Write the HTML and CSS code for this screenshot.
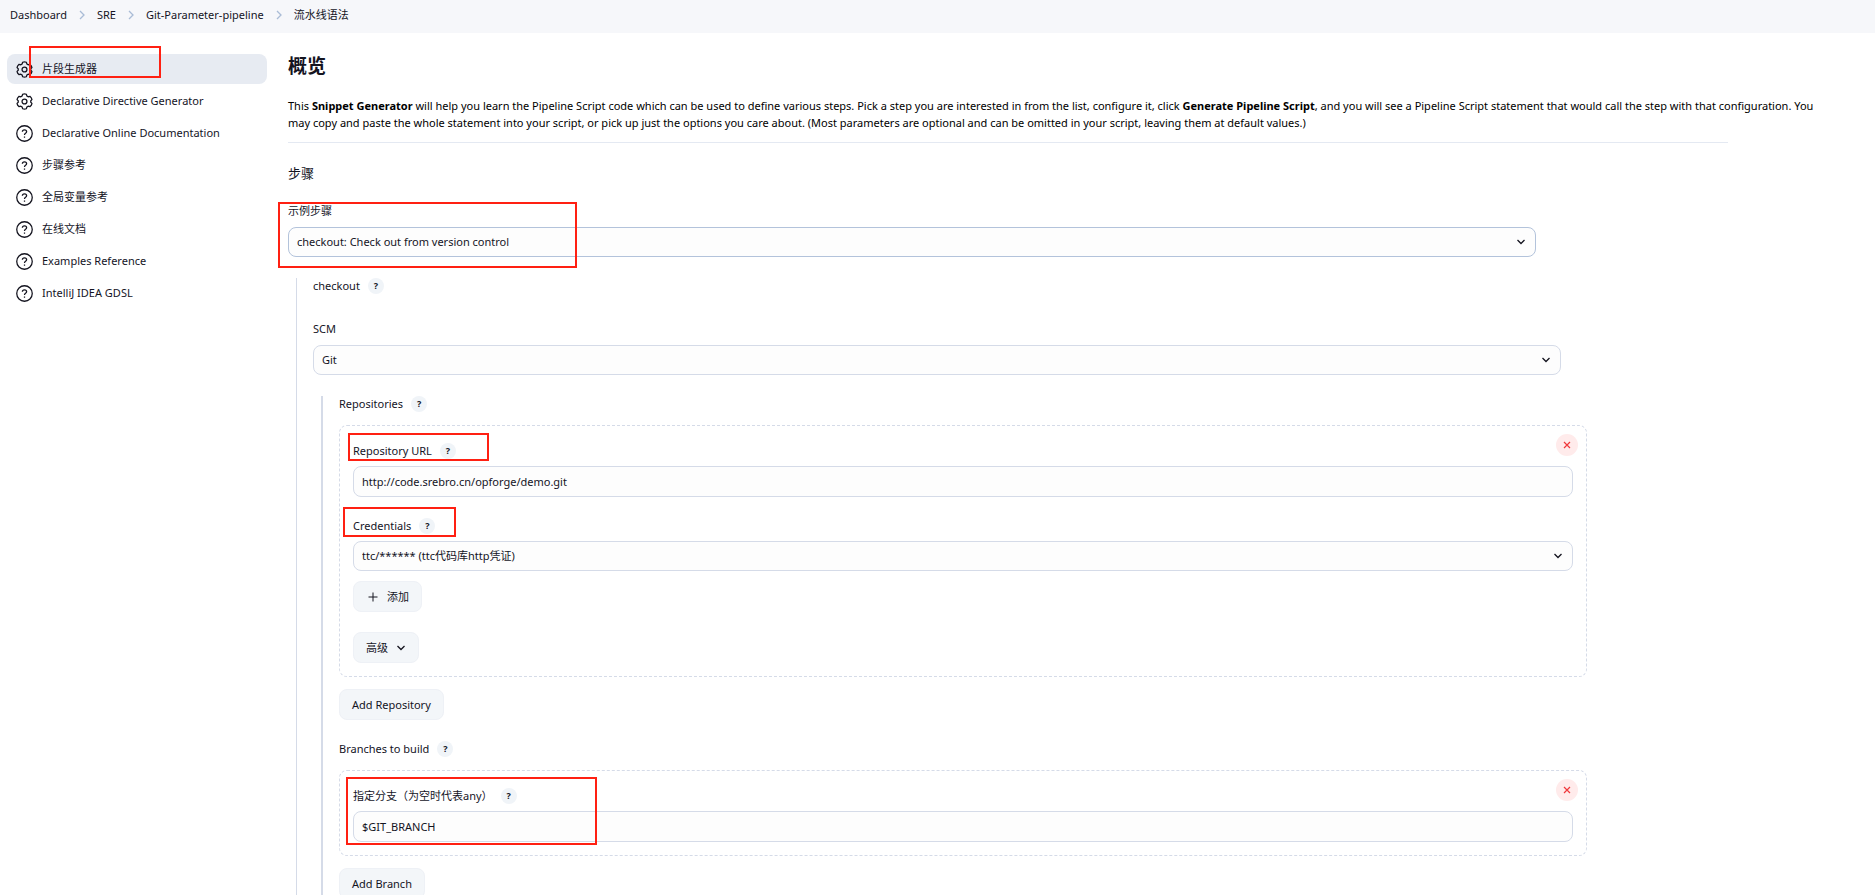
FILE: index.html
```html
<!DOCTYPE html>
<html lang="zh-CN">
<head>
    <meta charset="UTF-8">
    <meta name="viewport" content="width=device-width, initial-scale=1.0">
    <title>流水线语法</title>
    <link rel="stylesheet" href="styles.css">
</head>
<body>
    <!-- shared icons -->
    <svg class="sprite" aria-hidden="true">
        <symbol id="gear" viewBox="0 0 16 16">
            <path d="M6.3 1.2 Q8 .4 9.7 1.2 L10.3 2.8 L11.6 3.5 L13.3 3.2 Q14.8 4.4 15 6.2 L13.9 7.4 V8.6 L15 9.8 Q14.8 11.6 13.3 12.8 L11.6 12.5 L10.3 13.2 L9.7 14.8 Q8 15.6 6.3 14.8 L5.7 13.2 L4.4 12.5 L2.7 12.8 Q1.2 11.6 1 9.8 L2.1 8.6 V7.4 L1 6.2 Q1.2 4.4 2.7 3.2 L4.4 3.5 L5.7 2.8 Z"/>
            <circle cx="8" cy="8" r="2.3"/>
        </symbol>
        <symbol id="help" viewBox="0 0 16 16">
            <circle cx="8" cy="8" r="7.3"/>
            <path d="M6 6.3 C6 3.9 10 3.9 10 6.3 C10 7.8 8 7.8 8 9.3"/>
            <path d="M8 10.8 V12"/>
        </symbol>
        <symbol id="chevron" viewBox="0 0 10 10">
            <path d="M1.5 3 L5 6.5 L8.5 3"/>
        </symbol>
        <symbol id="crumb" viewBox="0 0 6 10">
            <path d="M1 1 L5 5 L1 9"/>
        </symbol>
        <symbol id="plus" viewBox="0 0 10 10">
            <path d="M5 .5 V9.5 M.5 5 H9.5"/>
        </symbol>
        <symbol id="cross" viewBox="0 0 8 8">
            <path d="M1 1 L7 7 M7 1 L1 7"/>
        </symbol>
    </svg>

    <nav class="breadcrumbs">
        <a href="#">Dashboard</a>
        <svg class="crumb"><use href="#crumb"/></svg>
        <a href="#">SRE</a>
        <svg class="crumb"><use href="#crumb"/></svg>
        <a href="#">Git-Parameter-pipeline</a>
        <svg class="crumb"><use href="#crumb"/></svg>
        <a href="#">流水线语法</a>
    </nav>

    <div class="page">
        <nav class="sidebar">
            <a class="task active" href="#"><svg class="icon"><use href="#gear"/></svg>片段生成器<span class="mark mark-task"></span></a>
            <a class="task" href="#"><svg class="icon"><use href="#gear"/></svg>Declarative Directive Generator</a>
            <a class="task" href="#"><svg class="icon"><use href="#help"/></svg>Declarative Online Documentation</a>
            <a class="task" href="#"><svg class="icon"><use href="#help"/></svg>步骤参考</a>
            <a class="task" href="#"><svg class="icon"><use href="#help"/></svg>全局变量参考</a>
            <a class="task" href="#"><svg class="icon"><use href="#help"/></svg>在线文档</a>
            <a class="task" href="#"><svg class="icon"><use href="#help"/></svg>Examples Reference</a>
            <a class="task" href="#"><svg class="icon"><use href="#help"/></svg>IntelliJ IDEA GDSL</a>
        </nav>

        <main>
            <h1>概览</h1>
            <p class="intro">This <b>Snippet Generator</b> will help you learn the Pipeline Script code which can be used to define various steps. Pick a step you are interested in from the list, configure it, click <b>Generate Pipeline Script</b>, and you will see a Pipeline Script statement that would call the step with that configuration. You may copy and paste the whole statement into your script, or pick up just the options you care about. (Most parameters are optional and can be omitted in your script, leaving them at default values.)</p>
            <hr>
            <h2>步骤</h2>

            <div class="field marked">
                <div class="label"><label for="step">示例步骤</label></div>
                <div class="select hover">
                    <select id="step"><option>checkout: Check out from version control</option></select>
                    <svg class="chevron"><use href="#chevron"/></svg>
                </div>
                <span class="mark mark-step"></span>
            </div>

            <section class="nested">
                <div class="label checkout">checkout <button class="help" type="button">?</button></div>
                <div class="field">
                    <div class="label"><label for="scm">SCM</label></div>
                    <div class="select">
                        <select id="scm"><option>Git</option></select>
                        <svg class="chevron"><use href="#chevron"/></svg>
                    </div>
                </div>

                <section class="nested inner">
                    <div class="label group">Repositories <button class="help" type="button">?</button></div>
                    <div class="chunk">
                        <button class="delete" type="button" aria-label="删除"><svg><use href="#cross"/></svg></button>
                        <div class="field marked">
                            <div class="label"><label for="url">Repository URL</label> <button class="help" type="button">?</button></div>
                            <input id="url" type="text" value="http://code.srebro.cn/opforge/demo.git">
                            <span class="mark mark-url"></span>
                        </div>
                        <div class="field marked credentials">
                            <div class="label"><label for="cred">Credentials</label> <button class="help" type="button">?</button></div>
                            <div class="select">
                                <select id="cred"><option>ttc/****** (ttc代码库http凭证)</option></select>
                                <svg class="chevron"><use href="#chevron"/></svg>
                            </div>
                            <span class="mark mark-cred"></span>
                        </div>
                        <button class="btn add" type="button"><svg class="plus"><use href="#plus"/></svg>添加</button>
                        <button class="btn advanced" type="button">高级<svg class="down"><use href="#chevron"/></svg></button>
                    </div>
                    <button class="btn" type="button">Add Repository</button>

                    <div class="label group branches">Branches to build <button class="help" type="button">?</button></div>
                    <div class="chunk">
                        <button class="delete" type="button" aria-label="删除"><svg><use href="#cross"/></svg></button>
                        <div class="field marked">
                            <div class="label"><label for="branch">指定分支（为空时代表any）</label> <button class="help" type="button">?</button></div>
                            <input id="branch" type="text" value="$GIT_BRANCH">
                            <span class="mark mark-branch"></span>
                        </div>
                    </div>
                    <button class="btn" type="button">Add Branch</button>
                </section>
            </section>
        </main>
    </div>
</body>
</html>
```
FILE: styles.css
```css
* {
    box-sizing: border-box;
}
body {
    margin: 0;
    background: #fff;
    color: #14141f;
    font-family: "Noto Sans", "Noto Sans CJK SC", sans-serif;
    font-size: 11px;
    line-height: 16px;
}
a {
    color: inherit;
    text-decoration: none;
}
svg {
    flex: none;
    fill: none;
    stroke: currentColor;
}
.sprite {
    display: none;
}
.breadcrumbs {
    display: flex;
    align-items: center;
    gap: 12px;
    height: 33px;
    padding: 0 10px 3px;
    background: #f6f7fa;
}
.crumb {
    width: 6px;
    height: 10px;
    color: #a9bcd6;
    stroke-width: 1.3;
}
.page {
    display: flex;
}
.sidebar {
    display: flex;
    flex-direction: column;
    gap: 2px;
    flex: none;
    width: 267px;
    padding: 21px 0 0 7px;
}
.task {
    position: relative;
    display: flex;
    align-items: center;
    gap: 9px;
    height: 30px;
    padding-left: 9px;
    border-radius: 8px;
}
.task.active {
    background: #e7ebf2;
}
.icon {
    width: 17px;
    height: 17px;
    stroke-width: 1.2;
}
main {
    flex: 1;
    min-width: 0;
    padding: 18px 0 0 21px;
}
h1 {
    margin: 0;
    font-size: 19px;
    line-height: 30px;
}
.intro {
    margin: 16px 0 11px;
    padding-right: 40px;
    line-height: 17px;
    color: #000;
}
hr {
    max-width: 1440px;
    height: 1px;
    margin: 0;
    border: 0;
    background: #e4e9f2;
}
h2 {
    margin: 20px 0;
    font-size: 13px;
    font-weight: 400;
    line-height: 20px;
}

/* form */
.field {
    max-width: 1248px;
}
.marked {
    position: relative;
}
.label {
    display: flex;
    align-items: center;
    gap: 8px;
    height: 16px;
    margin-bottom: 8px;
}
.help {
    width: 16px;
    height: 16px;
    padding: 0;
    border: 0;
    border-radius: 50%;
    background: #f0f4f8;
    color: inherit;
    font: bold 9px/16px "Noto Sans", sans-serif;
}
.select {
    position: relative;
}
select,
input {
    display: block;
    width: 100%;
    height: 31px;
    padding: 0 8px;
    border: 1px solid #d5dbe8;
    border-radius: 8px;
    background: #fdfdfd;
    color: inherit;
    font: inherit;
}
select {
    appearance: none;
    height: 30px;
}
.hover select {
    border-color: #b3c3db;
}
.chevron {
    position: absolute;
    top: 10px;
    right: 10px;
    width: 10px;
    height: 10px;
    stroke-width: 1.3;
    pointer-events: none;
}
.nested {
    margin: 21px 0 0 8px;
    padding-left: 16px;
    border-left: 1px solid #d5dbe8;
}
.inner {
    border-left-width: 2px;
}
.checkout {
    margin-bottom: 27px;
}
.group {
    margin-bottom: 13px;
}
.branches {
    margin-top: 21px;
}
.chunk {
    position: relative;
    max-width: 1248px;
    margin-bottom: 12px;
    padding: 17px 13px 13px;
    border: 1px dashed #d5dbe8;
    border-radius: 8px;
}
.chunk .label {
    margin-bottom: 7px;
}
.delete {
    position: absolute;
    top: 8px;
    right: 8px;
    display: flex;
    align-items: center;
    justify-content: center;
    width: 22px;
    height: 22px;
    padding: 0;
    border: 0;
    border-radius: 50%;
    background: #ffebeb;
    color: #f0383b;
}
.delete svg {
    width: 8px;
    height: 8px;
    stroke-width: 1.2;
}
.credentials {
    margin: 21px 0 10px;
}
.btn {
    display: flex;
    align-items: center;
    height: 31px;
    padding: 0 12px;
    border: 1px solid #eef1f6;
    border-radius: 8px;
    background: #f3f6f9;
    color: inherit;
    font: inherit;
}
.add {
    gap: 9px;
    padding-left: 14px;
}
.advanced {
    gap: 8px;
    margin-top: 20px;
}
.plus,
.down {
    width: 10px;
    height: 10px;
}
.down {
    stroke-width: 1.3;
}

/* red highlight frames */
.mark {
    position: absolute;
    border: 2px solid #ff2012;
    pointer-events: none;
}
.mark-task {
    top: -8px;
    left: 22px;
    width: 132px;
    height: 32px;
}
.mark-step {
    top: -1px;
    left: -10px;
    width: 299px;
    height: 66px;
}
.mark-url {
    top: -10px;
    left: -5px;
    width: 141px;
    height: 28px;
}
.mark-cred {
    top: -11px;
    left: -10px;
    width: 113px;
    height: 30px;
}
.mark-branch {
    top: -11px;
    left: -7px;
    width: 251px;
    height: 68px;
}
```
